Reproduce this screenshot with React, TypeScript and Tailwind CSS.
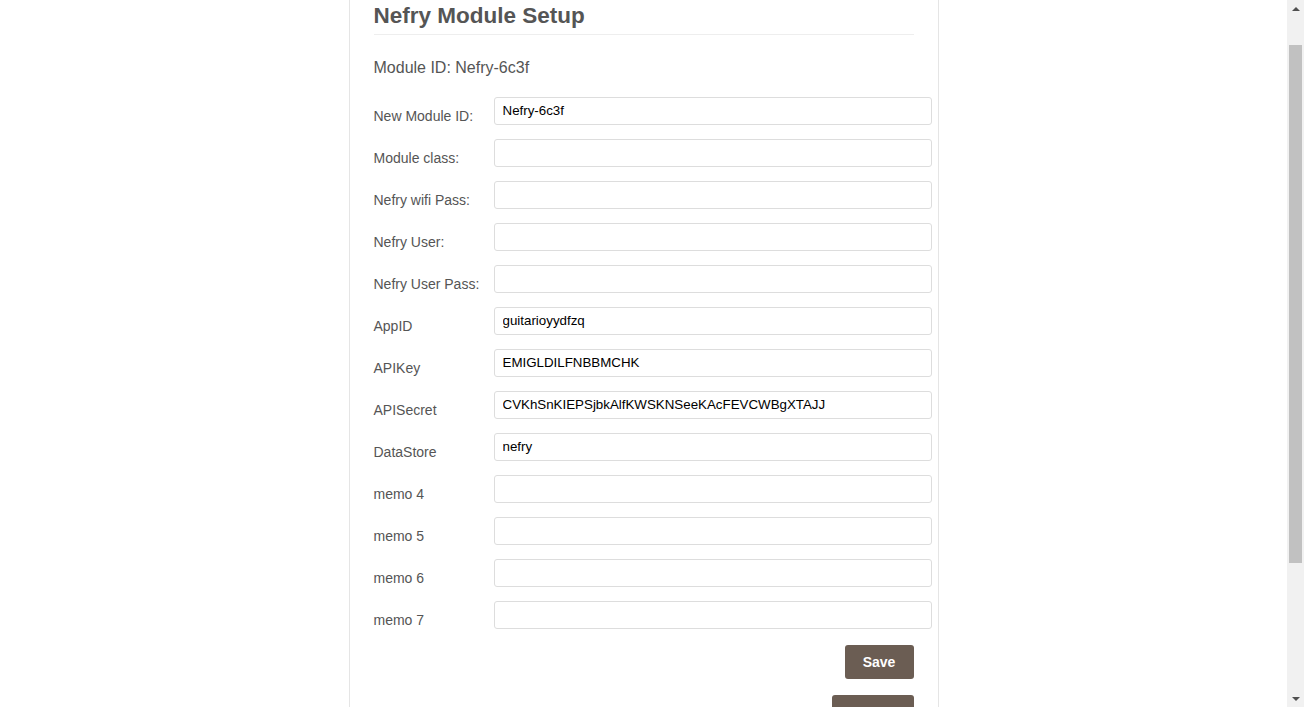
import { useEffect } from "react";

const FIELDS = [
  { label: "New Module ID:", value: "Nefry-6c3f" },
  { label: "Module class:", value: "" },
  { label: "Nefry wifi Pass:", value: "" },
  { label: "Nefry User:", value: "" },
  { label: "Nefry User Pass:", value: "" },
  { label: "AppID", value: "guitarioyydfzq" },
  { label: "APIKey", value: "EMIGLDILFNBBMCHK" },
  { label: "APISecret", value: "CVKhSnKIEPSjbkAlfKWSKNSeeKAcFEVCWBgXTAJJ" },
  { label: "DataStore", value: "nefry" },
  { label: "memo 4", value: "" },
  { label: "memo 5", value: "" },
  { label: "memo 6", value: "" },
  { label: "memo 7", value: "" },
];

function Scrollbar() {
  // window scrollbar, drawn since the headless page has none
  return (
    <div className="fixed top-0 right-0 h-full w-[17px] bg-[#f1f1f1] flex flex-col items-center">
      <div className="h-[17px] flex items-center justify-center">
        <div className="w-0 h-0 border-x-[4px] border-x-transparent border-b-[4px] border-b-[#505050]" />
      </div>
      <div className="mt-[28px] h-[518px] w-[13px] bg-[#c1c1c1]" />
      <div className="mt-auto h-[17px] flex items-center justify-center">
        <div className="w-0 h-0 border-x-[4px] border-x-transparent border-t-[4px] border-t-[#505050]" />
      </div>
    </div>
  );
}

export default function App() {
  useEffect(() => {
    window.scrollTo(0, 38);
  }, []);

  return (
    <div className="min-h-[918px] bg-white pr-[17px]" style={{ fontFamily: '"Liberation Sans", Arial, sans-serif' }}>
      <div className="mx-auto w-[590px] min-h-[918px] border-x border-[#e5e5e5] px-6 pt-[42px] pb-[150px]">
        {/* Title */}
        <h1 className="text-[22.5px] leading-[24px] font-bold text-[#555] pb-[6px] border-b border-[#eee]">
          Nefry Module Setup
        </h1>

        <p className="mt-[23px] text-[16px] leading-[20px] text-[#555]">Module ID: Nefry-6c3f</p>

        {/* Form */}
        <form className="mt-[19px]" onSubmit={(e) => e.preventDefault()}>
          {FIELDS.map((f) => (
            <div key={f.label} className="flex items-start mb-[14px]">
              <label className="w-[120px] shrink-0 h-[28px] pt-[11px] text-[14px] leading-[17px] text-[#555]">{f.label}</label>
              <input
                type="text"
                defaultValue={f.value}
                className="w-[438px] h-[28px] shrink-0 rounded-[3px] border border-[#ddd] bg-white px-2 pb-px text-[13.333px] text-black outline-none"
              />
            </div>
          ))}

          <div className="flex justify-end pt-[2px]">
            <button className="w-[69px] h-[34px] rounded-[3px] bg-[#6b5d53] text-[14px] font-bold text-white">Save</button>
          </div>
          <div className="flex justify-end mt-[16px]">
            <button className="w-[82px] h-[34px] rounded-[3px] bg-[#6b5d53] text-[14px] font-bold text-white">Restart</button>
          </div>
        </form>
      </div>
      <Scrollbar />
    </div>
  );
}
